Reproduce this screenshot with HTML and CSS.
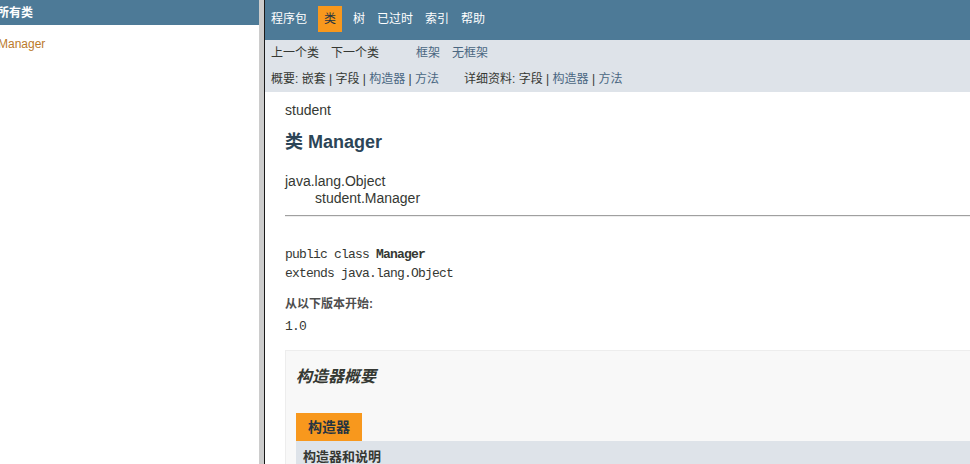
FILE: index.html
```html
<!DOCTYPE html>
<html lang="zh-CN">
<head>
<meta charset="utf-8">
<title>Manager</title>
<link rel="stylesheet" href="styles.css">
</head>
<body>
<div class="frames">
  <aside class="side">
    <div class="side-inner">
      <h1 class="bar">所有类</h1>
      <ul class="class-list">
        <li><a href="#">Manager</a></li>
      </ul>
    </div>
  </aside>
  <div class="splitter"></div>
  <main class="main">
    <div class="page">
      <div class="topnav">
        <ul class="navlist">
          <li>程序包</li>
          <li class="current">类</li>
          <li>树</li>
          <li>已过时</li>
          <li>索引</li>
          <li>帮助</li>
        </ul>
      </div>
      <div class="subnav">
        <div class="subnav-row1">
          <ul class="navlist">
            <li>上一个类</li>
            <li>下一个类</li>
          </ul>
          <ul class="navlist">
            <li><a href="#">框架</a></li>
            <li><a href="#">无框架</a></li>
          </ul>
        </div>
        <div class="subnav-row2">
          <ul class="subnavlist">
            <li>概要:&nbsp;</li><li>嵌套&nbsp;|&nbsp;</li><li>字段&nbsp;|&nbsp;</li><li><a href="#">构造器</a>&nbsp;|&nbsp;</li><li><a href="#">方法</a></li>
          </ul>
          <ul class="subnavlist">
            <li>详细资料:&nbsp;</li><li>字段&nbsp;|&nbsp;</li><li><a href="#">构造器</a>&nbsp;|&nbsp;</li><li><a href="#">方法</a></li>
          </ul>
        </div>
      </div>

      <div class="header">
        <div class="subtitle">student</div>
        <h2 class="title">类 Manager</h2>
      </div>

      <div class="content">
        <ul class="inheritance">
          <li>java.lang.Object</li>
          <li class="inherit-child">student.Manager</li>
        </ul>
        <hr class="rule">
        <pre class="signature">public class <span class="type-name">Manager</span>
extends java.lang.Object</pre>
        <dl class="since">
          <dt>从以下版本开始:</dt>
          <dd>1.0</dd>
        </dl>

        <section class="summary-block">
          <h3 class="summary-title">构造器概要</h3>
          <div class="caption"><span class="tab">构造器</span></div>
          <div class="table-head">构造器和说明</div>
        </section>
      </div>
    </div>
  </main>
</div>
</body>
</html>
```
FILE: styles.css
```css
html, body {
  margin: 0;
  padding: 0;
  height: 100%;
  background: #ffffff;
}

body {
  font-family: "Liberation Sans", "Noto Sans CJK SC", sans-serif;
  color: #353833;
}

.frames {
  display: flex;
  height: 100vh;
  overflow: hidden;
}

/* ---------- left frame ---------- */
.side {
  width: 259px;
  flex-shrink: 0;
  overflow: hidden;
  background: #ffffff;
}

.side-inner {
  margin-left: -12px;
  width: 280px;
}

.bar {
  margin: 0;
  height: 19px;
  padding: 6px 0 0 9px;
  background: #4d7a97;
  color: #ffffff;
  font-size: 12px;
  font-weight: bold;
  line-height: 14px;
}

.class-list {
  margin: 10px;
  padding: 0;
  list-style: none;
  font-size: 12px;
}

.class-list li {
  padding-top: 2px;
  line-height: 15px;
}

.class-list a {
  color: #bb7a2a;
  text-decoration: none;
}

/* ---------- splitter ---------- */
.splitter {
  width: 5px;
  flex-shrink: 0;
  background: #cccccc;
  border-right: 1px solid #1a1a1a;
}

/* ---------- main frame ---------- */
.main {
  flex: 1;
  min-width: 0;
  overflow: hidden;
}

.page {
  width: 800px;
}

.topnav {
  height: 34px;
  padding-top: 6px;
  background: #4d7a97;
  color: #ffffff;
  font-size: 12px;
}

.navlist {
  display: flex;
  margin: 0;
  padding: 0;
  list-style: none;
}

.navlist li {
  padding: 5px 6px;
  line-height: 16px;
}

.topnav .current {
  margin: 0 5px;
  background: #f8981d;
  color: #253441;
}

.subnav {
  background: #dee3e9;
  font-size: 12px;
  color: #353833;
}

.subnav a {
  color: #4a6782;
  text-decoration: none;
}

.subnav-row1 {
  display: flex;
  height: 26px;
}

.subnav-row1 .navlist {
  margin-right: 25px;
}

.subnav-row2 {
  display: flex;
  padding: 5px 0 5px 6px;
  line-height: 16px;
}

.subnavlist {
  display: flex;
  margin: 0 25px 0 0;
  padding: 0;
  list-style: none;
  white-space: pre;
}

/* ---------- header ---------- */
.header {
  margin: 0 20px;
  padding-top: 5px;
}

.subtitle {
  margin-top: 5px;
  font-size: 14px;
  line-height: 16px;
}

.title {
  margin: 12px 0 8px;
  font-size: 18px;
  font-weight: bold;
  line-height: 24px;
  color: #2c4557;
}

/* ---------- content ---------- */
.content {
  padding: 11px 20px 0;
}

.inheritance {
  margin: 0;
  padding: 0;
  list-style: none;
  font-size: 14px;
  line-height: 16px;
}

.inherit-child {
  padding: 1px 0 0 30px;
}

.rule {
  margin: 9px 0 0;
  height: 0;
  border: none;
  border-top: 1px solid #a0a0a0;
  border-bottom: 1px solid #eeeeee;
}

.signature {
  margin: 28px 0 0;
  font-family: "Liberation Mono", "DejaVu Sans Mono", monospace;
  font-size: 13px;
  letter-spacing: -0.8px;
  line-height: 19px;
  color: #353833;
}

.type-name {
  font-weight: bold;
}

.since {
  margin: 12px 0 0;
}

.since dt {
  font-size: 12px;
  font-weight: bold;
  line-height: 18px;
  color: #4e4e4e;
}

.since dd {
  margin: 6px 0 0;
  font-family: "Liberation Mono", "DejaVu Sans Mono", monospace;
  font-size: 13px;
  letter-spacing: -0.8px;
  line-height: 16px;
}

.summary-block {
  margin-top: 15px;
  padding: 0 20px 5px 10px;
  border: 1px solid #ededed;
  background: #f8f8f8;
  height: 200px;
}

.summary-title {
  margin: 15px 0;
  font-size: 16px;
  font-style: italic;
  font-weight: bold;
  line-height: 22px;
  color: #353833;
}

.caption {
  display: flex;
  padding-top: 10px;
}

.tab {
  height: 28px;
  padding: 0 12px;
  background: #f8981d;
  color: #253441;
  font-size: 14px;
  font-weight: bold;
  line-height: 28px;
}

.table-head {
  padding: 8px 3px 3px 7px;
  background: #dee3e9;
  font-size: 13px;
  font-weight: bold;
  line-height: 15px;
  height: 60px;
  color: #353833;
}
```
